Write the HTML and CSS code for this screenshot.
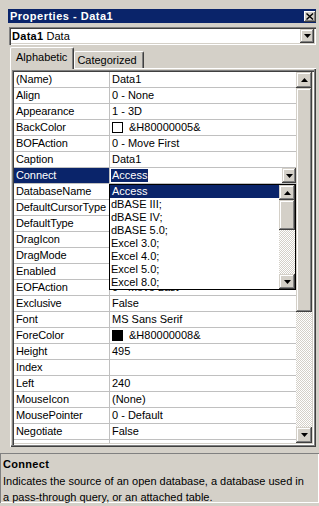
FILE: index.html
```html
<!DOCTYPE html>
<html lang="en">
  <head>
    <meta charset="UTF-8" />
    <title>Properties - Data1</title>
    <link rel="stylesheet" href="styles.css">
  </head>
  <body>
    <div class="window">
      <div class="titlebar">
        <span>Properties - Data1</span>
        <span class="close">
          <svg width="8" height="7" viewBox="0 0 8 7"><path d="M0.5 0.5 L7 6.5 M7 0.5 L0.5 6.5" stroke="#000" stroke-width="1.4" /></svg>
        </span>
      </div>

      <div class="objcombo">
        <span><b>Data1</b> Data</span>
        <span class="btn drop">
          <svg width="7" height="4" viewBox="0 0 7 4"><polygon points="0,0 7,0 3.5,4" fill="#000" /></svg>
        </span>
      </div>

      <div class="tabs">
        <span class="tab active">Alphabetic</span>
        <span class="tab">Categorized</span>
      </div>

      <div class="tabpage">
        <div class="grid">
          <div class="rows">
            <div class="row"><span class="name">(Name)</span><span class="value">Data1</span></div>
            <div class="row"><span class="name">Align</span><span class="value">0 - None</span></div>
            <div class="row"><span class="name">Appearance</span><span class="value">1 - 3D</span></div>
            <div class="row"><span class="name">BackColor</span><span class="value"><i class="swatch white"></i>&amp;H80000005&amp;</span></div>
            <div class="row"><span class="name">BOFAction</span><span class="value">0 - Move First</span></div>
            <div class="row"><span class="name">Caption</span><span class="value">Data1</span></div>
            <div class="row selected">
              <span class="name">Connect</span>
              <span class="value">
                <span class="hl">Access</span>
                <span class="btn cellbtn">
                  <svg width="7" height="4" viewBox="0 0 7 4"><polygon points="0,0 7,0 3.5,4" fill="#000" /></svg>
                </span>
              </span>
            </div>
            <!-- values of the next rows sit under the open list -->
            <div class="row"><span class="name">DatabaseName</span><span class="value"></span></div>
            <div class="row"><span class="name">DefaultCursorType</span><span class="value"></span></div>
            <div class="row"><span class="name">DefaultType</span><span class="value"></span></div>
            <div class="row"><span class="name">DragIcon</span><span class="value"></span></div>
            <div class="row"><span class="name">DragMode</span><span class="value"></span></div>
            <div class="row"><span class="name">Enabled</span><span class="value"></span></div>
            <div class="row"><span class="name">EOFAction</span><span class="value">0 - Move Last</span></div>
            <div class="row"><span class="name">Exclusive</span><span class="value">False</span></div>
            <div class="row"><span class="name">Font</span><span class="value">MS Sans Serif</span></div>
            <div class="row"><span class="name">ForeColor</span><span class="value"><i class="swatch black"></i>&amp;H80000008&amp;</span></div>
            <div class="row"><span class="name">Height</span><span class="value">495</span></div>
            <div class="row"><span class="name">Index</span><span class="value"></span></div>
            <div class="row"><span class="name">Left</span><span class="value">240</span></div>
            <div class="row"><span class="name">MouseIcon</span><span class="value">(None)</span></div>
            <div class="row"><span class="name">MousePointer</span><span class="value">0 - Default</span></div>
            <div class="row"><span class="name">Negotiate</span><span class="value">False</span></div>
            <div class="row"><span class="name"></span><span class="value"></span></div>
          </div>

          <div class="vscroll main">
            <span class="btn arrow">
              <svg width="7" height="4" viewBox="0 0 7 4"><polygon points="3.5,0 7,4 0,4" fill="#000" /></svg>
            </span>
            <span class="btn thumb"></span>
            <span class="track"></span>
            <span class="btn arrow">
              <svg width="7" height="4" viewBox="0 0 7 4"><polygon points="0,0 7,0 3.5,4" fill="#000" /></svg>
            </span>
          </div>

          <!-- open dropdown of the Connect property -->
          <div class="droplist">
            <div class="items">
              <div class="item hl">Access</div>
              <div class="item">dBASE III;</div>
              <div class="item">dBASE IV;</div>
              <div class="item">dBASE 5.0;</div>
              <div class="item">Excel 3.0;</div>
              <div class="item">Excel 4.0;</div>
              <div class="item">Excel 5.0;</div>
              <div class="item">Excel 8.0;</div>
            </div>
            <div class="vscroll small">
              <span class="btn arrow">
                <svg width="7" height="4" viewBox="0 0 7 4"><polygon points="3.5,0 7,4 0,4" fill="#000" /></svg>
              </span>
              <span class="btn thumb"></span>
              <span class="track"></span>
              <span class="btn arrow">
                <svg width="7" height="4" viewBox="0 0 7 4"><polygon points="0,0 7,0 3.5,4" fill="#000" /></svg>
              </span>
            </div>
          </div>
        </div>
      </div>

      <div class="desc">
        <b>Connect</b>
        <p>Indicates the source of an open database, a database used in a pass-through query, or an attached table.</p>
      </div>
    </div>
  </body>
</html>
```

FILE: styles.css
```css
body {
  margin: 0;
  background-color: #d4d0c8;
  font-family: "Liberation Sans", Arial, sans-serif;
  font-size: 11px;
  color: #000;
}
b {
  letter-spacing: 0.3px;
}
.window {
  width: 319px;
  height: 506px;
  box-sizing: border-box;
  padding: 9px 3px 0 8px;
  overflow: hidden;
}
.titlebar {
  height: 14px;
  background-color: #0a246a;
  color: #fff;
  font-weight: bold;
  letter-spacing: 0.5px;
  display: flex;
  align-items: center;
  justify-content: space-between;
  padding-left: 2px;
}
.close {
  width: 12px;
  height: 11px;
  box-sizing: border-box;
  background-color: #d4d0c8;
  display: flex;
  align-items: center;
  justify-content: center;
  box-shadow: inset -1px -1px #404040, inset 1px 1px #fff, inset -2px -2px #808080;
}
.btn {
  background-color: #d4d0c8;
  display: flex;
  align-items: center;
  justify-content: center;
  box-sizing: border-box;
  box-shadow: inset -1px -1px #404040, inset 1px 1px #d4d0c8, inset -2px -2px #808080, inset 2px 2px #fff;
}
.objcombo {
  margin: 4px 0 0 1px;
  height: 18px;
  box-sizing: border-box;
  background-color: #fff;
  display: flex;
  align-items: center;
  justify-content: space-between;
  padding: 0 2px 0 3px;
  box-shadow: inset 1px 1px #808080, inset 2px 2px #404040, inset -1px -1px #fff, inset -2px -2px #d4d0c8;
}
.objcombo .drop {
  width: 14px;
  height: 14px;
}
.tabs {
  margin-top: 2px;
  height: 21px;
  display: flex;
  align-items: flex-end;
  padding-left: 2px;
}
.tab {
  height: 17px;
  line-height: 16px;
  padding: 0 6px 0 2px;
  box-sizing: border-box;
  border: 1px solid #fff;
  border-bottom: none;
  border-right-color: #404040;
  border-radius: 2px 2px 0 0;
  box-shadow: inset -1px 0 #808080;
}
.tab.active {
  height: 22px;
  line-height: 19px;
  margin-bottom: -1px;
  padding: 0 6px 0 5px;
  background-color: #d4d0c8;
  position: relative;
}
.tabpage {
  margin-left: 2px;
  padding: 2px;
  box-shadow: inset 1px 1px #fff, inset -1px -1px #404040, inset -2px -2px #808080;
}
.grid {
  position: relative;
  display: flex;
  height: 375px;
  box-sizing: border-box;
  padding: 2px;
  box-shadow: inset 1px 1px #808080, inset 2px 2px #404040, inset -1px -1px #fff, inset -2px -2px #d4d0c8;
}
.rows {
  flex: 1;
  background-color: #fff;
  overflow: hidden;
}
.row {
  display: flex;
  height: 16px;
  box-sizing: border-box;
  border-bottom: 1px solid #c0c0c0;
  line-height: 15px;
  white-space: nowrap;
}
.name {
  width: 96px;
  flex: none;
  box-sizing: border-box;
  padding-left: 2px;
  border-right: 1px solid #c0c0c0;
  letter-spacing: -0.1px;
  overflow: hidden;
}
.value {
  flex: 1;
  display: flex;
  align-items: center;
  padding-left: 2px;
  overflow: hidden;
}
.swatch {
  width: 11px;
  height: 11px;
  box-sizing: border-box;
  border: 1px solid #000;
  margin-right: 6px;
}
.swatch.white {
  background-color: #fff;
}
.swatch.black {
  background-color: #000;
}
.selected .name {
  background-color: #0a246a;
  color: #fff;
}
.selected .value {
  justify-content: space-between;
  padding-left: 1px;
}
.hl {
  background-color: #0a246a;
  color: #fff;
  padding: 0 1px;
  line-height: 13px;
}
.cellbtn {
  width: 14px;
  height: 15px;
}
.vscroll {
  width: 16px;
  flex: none;
  display: flex;
  flex-direction: column;
}
.arrow {
  height: 16px;
  flex: none;
}
.track {
  flex: 1;
  background: repeating-conic-gradient(#fff 0 25%, #d4d0c8 0 50%) 0 0 / 2px 2px;
}
.main .thumb {
  height: 224px;
  flex: none;
}
.droplist {
  position: absolute;
  left: 97px;
  top: 114px;
  width: 187px;
  height: 106px;
  box-sizing: border-box;
  border: 1px solid #000;
  background-color: #fff;
  display: flex;
}
.items {
  flex: 1;
}
.item {
  height: 13px;
  line-height: 13px;
  padding-left: 1px;
  white-space: nowrap;
}
.item.hl {
  padding-left: 2px;
}
.small .arrow {
  height: 15px;
}
.small .thumb {
  height: 30px;
  flex: none;
}
.desc {
  margin: 6px -3px 0 -8px;
  height: 50px;
  box-sizing: border-box;
  padding: 4px 3px 0 3px;
  box-shadow: inset 1px 1px #808080, inset -1px -1px #fff;
}
.desc p {
  margin: 2px 0 0;
  width: 308px;
  line-height: 16px;
}
.desc b {
  display: block;
  line-height: 14px;
}
```
